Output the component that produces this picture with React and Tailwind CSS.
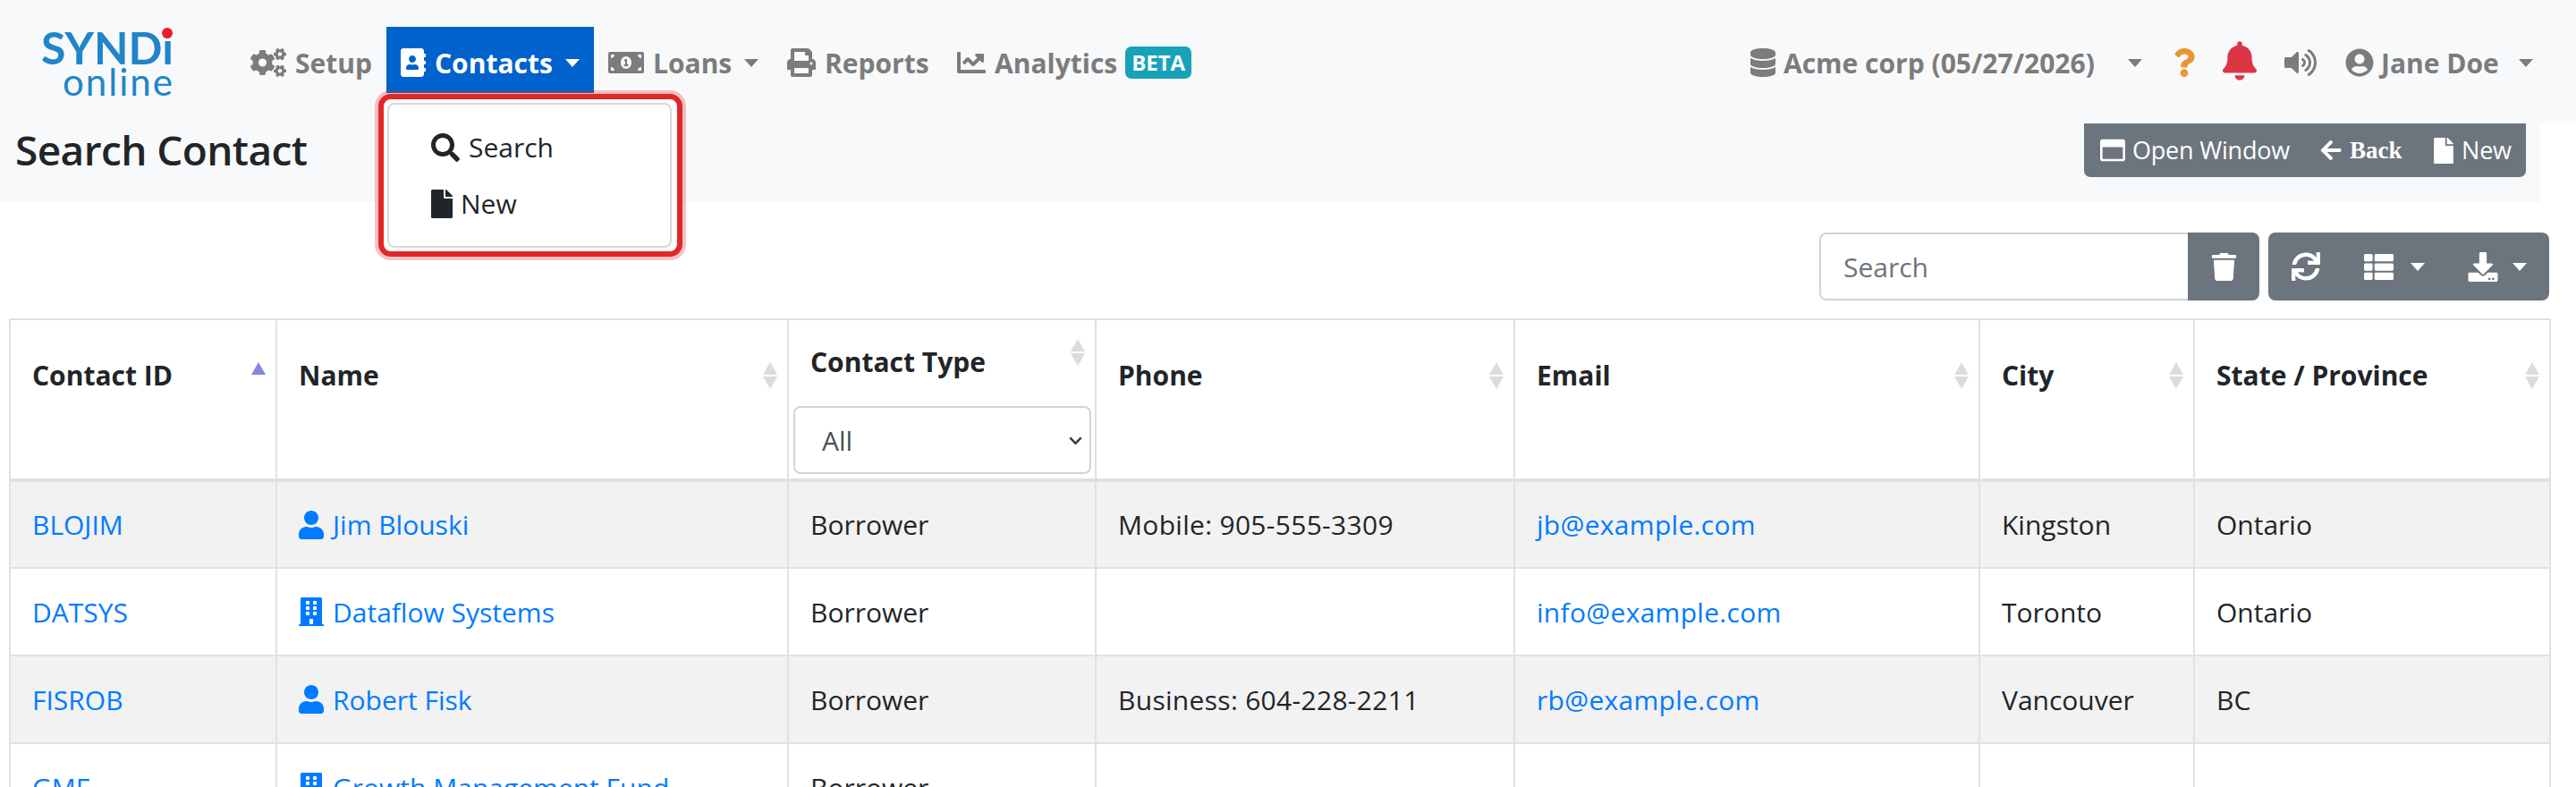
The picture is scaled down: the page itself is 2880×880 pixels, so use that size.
import {
  FaAddressBook,
  FaArrowLeft,
  FaBell,
  FaBuilding,
  FaChartLine,
  FaChevronDown,
  FaCogs,
  FaDatabase,
  FaDownload,
  FaFile,
  FaMoneyBillAlt,
  FaPrint,
  FaQuestion,
  FaSearch,
  FaSync,
  FaThList,
  FaTrash,
  FaUser,
  FaUserCircle,
  FaRegWindowMaximize,
  FaVolumeUp,
} from 'react-icons/fa';

const FONT = "font-['Open_Sans','Noto_Sans',sans-serif]";

const ROWS = [
  { id: 'BLOJIM', name: 'Jim Blouski', kind: 'person', phone: 'Mobile: 905-555-3309', email: 'jb@example.com', city: 'Kingston', state: 'Ontario' },
  { id: 'DATSYS', name: 'Dataflow Systems', kind: 'company', phone: '', email: 'info@example.com', city: 'Toronto', state: 'Ontario' },
  { id: 'FISROB', name: 'Robert Fisk', kind: 'person', phone: 'Business: 604-228-2211', email: 'rb@example.com', city: 'Vancouver', state: 'BC' },
  { id: 'GMF', name: 'Growth Management Fund', kind: 'company', phone: '', email: '', city: '', state: '' },
];

function Caret({ className = 'border-t-[#7c7c7d]' }) {
  return <span className={`block h-0 w-0 border-x-[8px] border-t-[9px] border-x-transparent ${className}`} />;
}

function NavItem({ icon, label, width, caret, active, children }) {
  return (
    <div className={`flex h-[74px] shrink-0 items-center px-4 pt-[6px] text-[30px] font-bold ${width} ${active ? 'bg-[#0062cc] text-white' : 'text-[#7c7c7d]'}`}>
      {icon}
      <span className="ml-[10px] whitespace-nowrap">{label}</span>
      {children}
      {caret && <span className="ml-auto"><Caret className={active ? 'border-t-white' : 'border-t-[#7c7c7d]'} /></span>}
    </div>
  );
}

function SortArrows({ active }) {
  if (active) {
    return (
      <svg viewBox="0 0 18 30" className="h-[30px] w-[18px] shrink-0">
        <path d="M9 0 L17 14 H1 Z" fill="#8585de" />
      </svg>
    );
  }
  return (
    <svg viewBox="0 0 18 30" className="h-[30px] w-[18px] shrink-0">
      <path d="M9 0 L17 14 H1 Z" fill="#dcdcdc" />
      <path d="M9 30 L17 16 H1 Z" fill="#dcdcdc" />
    </svg>
  );
}

function Th({ label, active }) {
  return (
    <th className="h-[180px] border-2 border-b-[4px] border-[#dee2e6] p-0 align-top">
      <div className="flex items-start justify-between pl-[24px] pr-[10px] pt-[39px]">
        <span className="whitespace-nowrap text-[30px] font-bold text-[#212529]">{label}</span>
        <span className="mt-[8px]"><SortArrows active={active} /></span>
      </div>
    </th>
  );
}

function Td({ children, link, wide }) {
  return (
    <td className={`h-[98px] overflow-hidden whitespace-nowrap border-2 border-[#dee2e6] pl-[24px] text-[30px] ${wide ? 'tracking-[0.3px]' : ''} ${link ? 'text-[#007bff]' : 'text-[#212529]'}`}>
      {children}
    </td>
  );
}

export default function App() {
  return (
    <div className={`relative h-[880px] w-[2880px] overflow-hidden bg-white ${FONT}`}>
      {/* navbar */}
      <div className="flex h-[138px] items-start bg-[#f8f9fa] pt-[30px]">
        <div className="ml-[46px] mt-[2px] flex w-[218px] shrink-0 flex-col items-start leading-none text-[#2085c9]">
          <span className="relative font-['Lato',sans-serif] text-[50px] font-bold leading-[42px]">
            SYNDi
            <span className="absolute right-[1px] top-[-1px] h-[12px] w-[12px] rounded-full bg-[#ee1c25]" />
          </span>
          <span className="ml-[24px] font-['Lato',sans-serif] text-[42px] leading-[34px] tracking-[2px]">online</span>
        </div>
        <NavItem width="w-[168px]" label="Setup" icon={<FaCogs className="h-[32px] w-[40px] shrink-0" />} />
        <NavItem width="w-[232px]" active caret label="Contacts" icon={<FaAddressBook className="h-[32px] w-[28px] shrink-0" />} />
        <NavItem width="w-[200px]" caret label="Loans" icon={<FaMoneyBillAlt className="h-[32px] w-[40px] shrink-0" />} />
        <NavItem width="w-[190px]" label="Reports" icon={<FaPrint className="h-[32px] w-[32px] shrink-0" />} />
        <NavItem width="w-[294px]" label="Analytics" icon={<FaChartLine className="h-[32px] w-[32px] shrink-0" />}>
          <span className="ml-[9px] flex h-[36px] w-[76px] items-center justify-center rounded-[7px] bg-[#17a2b8] text-[24px] font-bold text-white">BETA</span>
        </NavItem>

        <div className="ml-auto mr-[48px] flex h-[74px] items-center pt-[6px] text-[30px] font-bold text-[#7c7c7d]">
          <FaDatabase className="h-[32px] w-[30px] shrink-0" />
          <span className="ml-[8px] w-[367px] whitespace-nowrap">Acme corp (05/27/2026)</span>
          <span className="ml-[18px]"><Caret /></span>
          <FaQuestion className="ml-[35px] h-[32px] w-[24px] shrink-0 text-[#ec9433]" />
          <FaBell className="ml-[31px] mt-[-4px] h-[44px] w-[38px] shrink-0 text-[#dc3545]" />
          <FaVolumeUp className="ml-[31px] h-[32px] w-[36px] shrink-0" />
          <FaUserCircle className="ml-[32px] h-[32px] w-[32px] shrink-0" />
          <span className="ml-[8px] w-[136px] whitespace-nowrap">Jane Doe</span>
          <span className="ml-[18px]"><Caret /></span>
        </div>
      </div>

      {/* page title bar */}
      <div className="flex h-[88px] w-[2840px] items-start justify-between bg-[#f8f9fa] pl-[17px] pr-4">
        <h1 className="mt-[-5px] text-[46px] font-semibold tracking-[-0.6px] text-[#212529]">Search Contact</h1>
        <div className="flex h-[60px] w-[494px] items-center rounded-b-[7px] bg-[#6c757d] pl-[18px] text-[27px] tracking-[-0.2px] text-white">
          <FaRegWindowMaximize className="h-[28px] w-[28px] shrink-0" />
          <span className="ml-[8px] w-[177px] whitespace-nowrap">Open Window</span>
          <FaArrowLeft className="ml-[33px] h-[26px] w-[24px] shrink-0" />
          <span className="ml-[9px] w-[61px] whitespace-nowrap font-['Liberation_Serif',serif] text-[27px] font-bold tracking-normal">Back</span>
          <FaFile className="ml-[33px] h-[29px] w-[22px] shrink-0" />
          <span className="ml-[9px] whitespace-nowrap">New</span>
        </div>
      </div>

      {/* toolbar */}
      <div className="mt-[34px] flex h-[76px] justify-end gap-[10px] pr-[30px]">
        <div className="flex">
          <input
            readOnly
            placeholder="Search"
            className="h-[76px] w-[412px] rounded-l-[8px] border-2 border-r-0 border-[#ced4da] bg-white pl-[25px] text-[30px] text-[#495057] outline-none placeholder:text-[#6c757d]"
          />
          <div className="flex w-[80px] items-center justify-center rounded-r-[8px] bg-[#6c757d] text-white">
            <FaTrash className="h-[31px] w-[27px]" />
          </div>
        </div>
        <div className="flex w-[314px] items-center rounded-[8px] bg-[#6c757d] pl-[26px] text-white">
          <FaSync className="h-[32px] w-[32px] shrink-0" />
          <FaThList className="ml-[49px] h-[33px] w-[33px] shrink-0" />
          <span className="ml-[19px]"><Caret className="border-t-white" /></span>
          <FaDownload className="ml-[48px] h-[33px] w-[34px] shrink-0" />
          <span className="ml-[16px]"><Caret className="border-t-white" /></span>
        </div>
      </div>

      {/* table */}
      <table className="ml-[10px] mt-[20px] w-[2840px] table-fixed border-collapse">
        <colgroup>
          <col className="w-[298px]" />
          <col className="w-[572px]" />
          <col className="w-[344px]" />
          <col className="w-[468px]" />
          <col className="w-[520px]" />
          <col className="w-[240px]" />
          <col className="w-[398px]" />
        </colgroup>
        <thead>
          <tr>
            <Th label="Contact ID" active />
            <Th label="Name" />
            <th className="h-[180px] border-2 border-b-[4px] border-[#dee2e6] p-0 align-top">
              <div className="flex items-start justify-between pl-[24px] pr-[10px] pt-[24px]">
                <span className="whitespace-nowrap text-[30px] font-bold text-[#212529]">Contact Type</span>
                <span className="mt-[-3px]"><SortArrows /></span>
              </div>
              <div className="relative ml-[5px] mt-[27px] w-[333px]">
                <select className="h-[76px] w-full appearance-none rounded-[8px] border-2 border-[#ced4da] bg-white pl-[30px] text-[30px] font-normal text-[#495057]">
                  <option>All</option>
                </select>
                <FaChevronDown className="pointer-events-none absolute right-[9px] top-[31px] h-[16px] w-[17px] text-[#343a40]" />
              </div>
            </th>
            <Th label="Phone" />
            <Th label="Email" />
            <Th label="City" />
            <Th label="State / Province" />
          </tr>
        </thead>
        <tbody>
          {ROWS.map((row, i) => (
            <tr key={row.id} className={i % 2 === 0 ? 'bg-[#f2f2f2]' : 'bg-white'}>
              <Td link>{row.id}</Td>
              <Td link>
                <span className="flex items-center gap-[10px]">
                  {row.kind === 'person' ? <FaUser className="h-[32px] w-[28px] shrink-0" /> : <FaBuilding className="h-[32px] w-[28px] shrink-0" />}
                  {row.name}
                </span>
              </Td>
              <Td>Borrower</Td>
              <Td wide>{row.phone}</Td>
              <Td link wide>{row.email}</Td>
              <Td>{row.city}</Td>
              <Td>{row.state}</Td>
            </tr>
          ))}
        </tbody>
      </table>

      {/* Contacts dropdown, highlighted */}
      <div className="absolute left-[423px] top-[105px] h-[182px] w-[340px] rounded-[14px] border-[6px] border-[#e02828] bg-white pb-[4px] pl-[4px] pr-[6px] pt-[4px] shadow-[0_0_0_4px_rgba(224,40,40,0.28)]">
        <div className="h-full rounded-[8px] border-2 border-[#d8d8d8] pt-[16px] text-[30px] text-[#212529]">
          <div className="flex h-[63px] items-center pl-[47px]">
            <FaSearch className="h-[32px] w-[32px] shrink-0" />
            <span className="ml-[10px]">Search</span>
          </div>
          <div className="flex h-[63px] items-center pl-[47px]">
            <FaFile className="h-[32px] w-[24px] shrink-0" />
            <span className="ml-[9px]">New</span>
          </div>
        </div>
      </div>
    </div>
  );
}
